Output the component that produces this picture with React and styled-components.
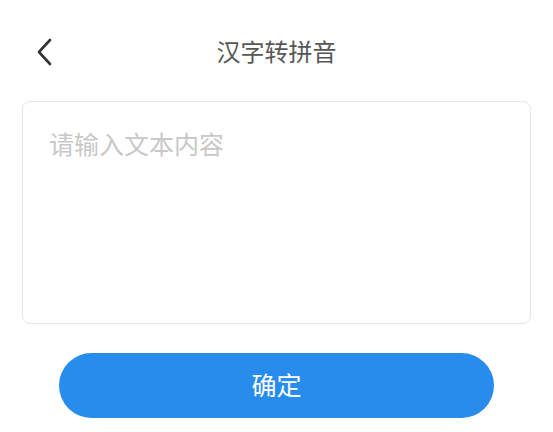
import React from "react";
import styled, { createGlobalStyle } from "styled-components";

const Global = createGlobalStyle`
  html, body { margin: 0; padding: 0; background: #ffffff; }
  body { font-family: "Noto Sans CJK SC", "Noto Sans", sans-serif; }
  * { box-sizing: border-box; }
`;

const Page = styled.div`
  width: 553px;
  display: flex;
  flex-direction: column;
`;

const Header = styled.header`
  position: relative;
  height: 101px;
  display: flex;
  align-items: center;
  justify-content: center;
`;

const BackButton = styled.button`
  position: absolute;
  left: 29px;
  top: 34px;
  width: 30px;
  height: 36px;
  padding: 0;
  border: none;
  background: transparent;
  display: flex;
  align-items: center;
  justify-content: center;
  cursor: pointer;
`;

const Title = styled.h1`
  margin: 0;
  font-size: 24px;
  font-weight: 400;
  color: #575757;
  letter-spacing: 0;
`;

const Body = styled.main`
  padding: 0 22px;
  display: flex;
  flex-direction: column;
`;

const TextBox = styled.textarea`
  width: 100%;
  height: 223px;
  border: 1px solid #e6e6e6;
  border-radius: 8px;
  padding: 24px 26px;
  resize: none;
  outline: none;
  font-family: "Noto Sans CJK SC", "Noto Sans", sans-serif;
  font-size: 25px;
  line-height: 1.4;
  color: #333;
  &::placeholder { color: #c8c8c8; }
`;

const Actions = styled.div`
  padding: 29px 59px 0;
  display: flex;
`;

const Confirm = styled.button`
  flex: 1;
  height: 65px;
  padding: 0 0 4px;
  border: none;
  border-radius: 33px;
  background: #288ced;
  color: #ffffff;
  font-family: "Noto Sans CJK SC", "Noto Sans", sans-serif;
  font-size: 25px;
  cursor: pointer;
`;

export default function App() {
  return (
    <>
      <Global />
      <Page>
        <Header>
          <BackButton aria-label="back">
            <svg width="16" height="28" viewBox="0 0 16 28" fill="none">
              <path d="M14 2 L3 14 L14 26" stroke="#333" strokeWidth="2.6" strokeLinecap="round" strokeLinejoin="round" />
            </svg>
          </BackButton>
          <Title>汉字转拼音</Title>
        </Header>
        <Body>
          <TextBox placeholder="请输入文本内容" />
        </Body>
        <Actions>
          <Confirm>确定</Confirm>
        </Actions>
      </Page>
    </>
  );
}
